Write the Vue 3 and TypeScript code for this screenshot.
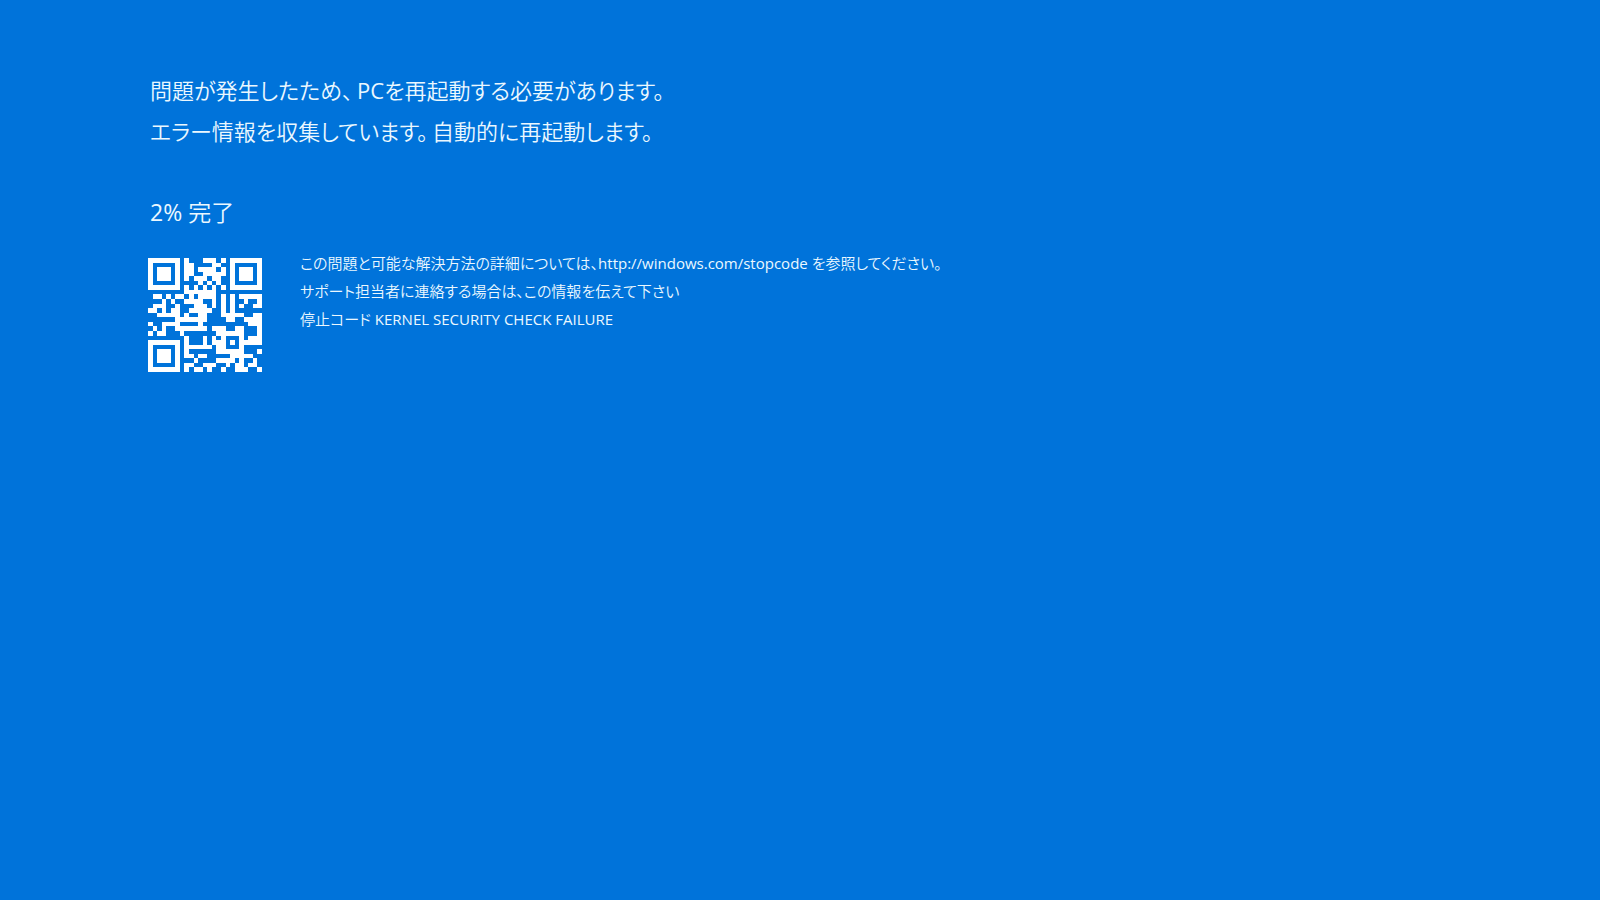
<script setup lang="ts">
const rows = [
  '1111111010001110101111111',
  '1000001011000011001000001',
  '1011101011011110101011101',
  '1011101011001111101011101',
  '1011101010111011001011101',
  '1000001000010101001000001',
  '1111111010101010101111111',
  '0000000011111110000000000',
  '0110101101011110101011111',
  '0001010011110010101001001',
  '0111001000111010101010011',
  '1101011001111100101000000',
  '0011111010011000111110011',
  '0000001111111000011001111',
  '1001111000010000000000111',
  '0101001111111011100110001',
  '1011000100000001111110001',
  '0000000010001010100010111',
  '1111111010001011101011111',
  '1000001011111101100010000',
  '1011101010000001111110001',
  '1011101011011000001111100',
  '1011101000100001111010010',
  '1000001011001110010110110',
  '1111111010110100100111001',
]

const modules = rows
  .map((row, y) => [...row].map((bit, x) => (bit === '1' ? `M${x} ${y}h1v1h-1z` : '')).join(''))
  .join('')
</script>

<template>
  <main class="screen">
    <section class="lead">
      <p>問題が発生したため<span class="stop">、</span><span class="latin">PC</span>を再起動する必要があります。</p>
      <p>エラー情報を収集しています<span class="stop">。</span>自動的に再起動します。</p>
    </section>
    <p class="progress"><span class="latin">2%</span> 完了</p>
    <section class="support">
      <svg class="qr" viewBox="0 0 25 25" role="img" aria-label="QR">
        <path :d="modules" fill="currentColor" />
      </svg>
      <div class="details">
        <p>この問題と可能な解決方法の詳細については、<span class="latin">http://windows.com/stopcode</span> を参照してください。</p>
        <p>サポート担当者に連絡する場合は、この情報を伝えて下さい</p>
        <p>停止コード <span class="latin">KERNEL SECURITY CHECK FAILURE</span></p>
      </div>
    </section>
  </main>
</template>

<style scoped>
.screen {
  box-sizing: border-box;
  min-height: 100vh;
  padding: 70px 148px;
  background: #0073da;
  color: #ebf8ff;
  font-family: "Open Sans", "Noto Sans CJK JP", sans-serif;
  font-feature-settings: "palt";
  font-weight: 350;
}
p {
  margin: 0;
}
.lead,
.progress {
  padding-left: 2px;
  line-height: 41px;
}
.lead {
  font-size: 22px;
}
.latin {
  font-weight: 400;
}
.stop {
  margin-right: 4px;
}
.progress {
  margin-top: 40px;
  font-size: 23px;
}
.support {
  display: flex;
  gap: 38px;
  margin-top: 25px;
}
.qr {
  flex: none;
  width: 114px;
  height: 114px;
  color: #fff;
  shape-rendering: crispEdges;
}
.details {
  margin-top: -9px;
  font-size: 15px;
  line-height: 28px;
}
</style>

<style>
body {
  margin: 0;
}
</style>
